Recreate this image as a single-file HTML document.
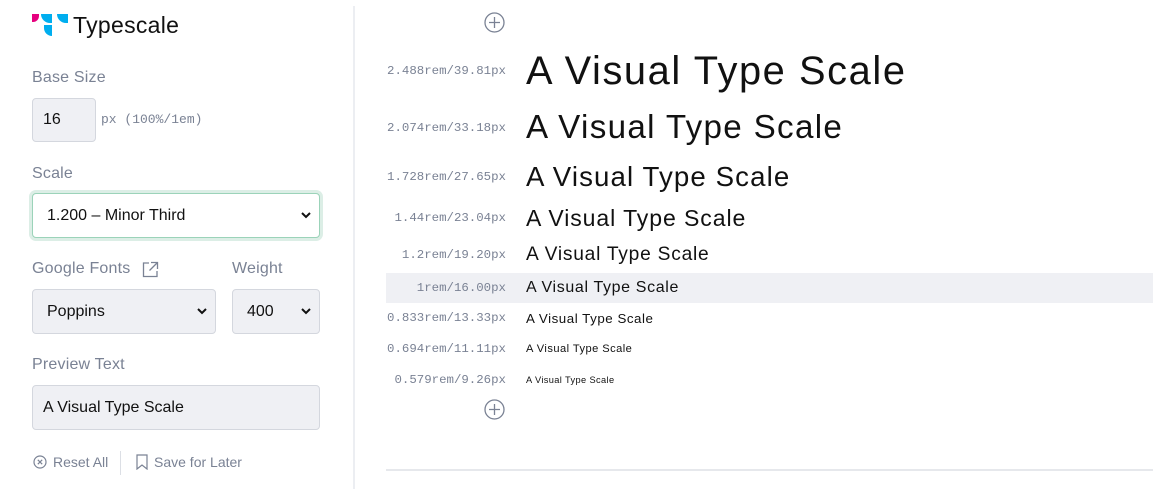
<!DOCTYPE html>
<html><head><style>
*{margin:0;padding:0;box-sizing:border-box}
body{width:1153px;height:489px;background:#fff;font-family:"Liberation Sans",sans-serif;position:relative;overflow:hidden;color:#111}
.abs{position:absolute}
.lbl{color:#7a8294;font-size:16px;letter-spacing:.2px}
.box{background:#eff0f4;border:1px solid #d4d7de;border-radius:4px;font-size:16px;color:#111;display:flex;align-items:center}
.chev{position:absolute;right:8px;top:50%;margin-top:-4px}
.row{position:absolute;left:386px;width:767px;display:flex;align-items:center}
.row .k{width:120px;text-align:right;font-family:"Liberation Mono",monospace;font-size:12.4px;color:#7a8294;white-space:nowrap}
.row .s{margin-left:20px;letter-spacing:.04em;white-space:nowrap;color:#111}
.lg{position:absolute}
</style></head><body>
<div class="lg" style="left:32px;top:14px;width:7px;height:8px;background:#e6007e;border-bottom-right-radius:6px"></div>
<div class="lg" style="left:41px;top:14px;width:11px;height:9px;background:#00aeef;border-bottom-left-radius:9px"></div>
<div class="lg" style="left:57px;top:14px;width:11px;height:9px;background:#00aeef;border-bottom-left-radius:9px"></div>
<div class="lg" style="left:44px;top:25px;width:8px;height:11px;background:#00aeef;border-bottom-left-radius:9px"></div>
<div class="abs" style="left:73px;top:12px;font-size:23px;color:#111;letter-spacing:.3px">Typescale</div>
<div class="abs" style="left:353px;top:6px;width:2px;height:483px;background:#eceef2"></div>

<div class="abs lbl" style="left:32px;top:69px">Base Size</div>
<div class="abs box" style="left:32px;top:98px;width:64px;height:44px;padding-left:10px">16</div>
<div class="abs" style="left:101px;top:112px;font-family:'Liberation Mono',monospace;font-size:13px;color:#7a8294">px (100%/1em)</div>

<div class="abs lbl" style="left:32px;top:165px">Scale</div>
<div class="abs box" style="left:32px;top:193px;width:288px;height:45px;padding-left:14px;background:#fff;border:1px solid #9bd3b9;box-shadow:0 0 0 3px #dceee6">1.200 – Minor Third
<svg class="chev" width="10" height="7" viewBox="0 0 10 7"><path d="M1 1L5 5L9 1" stroke="#111" stroke-width="2" fill="none"/></svg></div>

<div class="abs lbl" style="left:32px;top:260px">Google Fonts</div>
<svg class="abs" style="left:142px;top:261px" width="17" height="17" viewBox="0 0 17 17"><path d="M7 2H1.5V15.5H15V10M9 1.5H15.5V8M15.5 1.5L7.5 9.5" stroke="#7a8294" stroke-width="1.3" fill="none"/></svg>
<div class="abs lbl" style="left:232px;top:260px">Weight</div>
<div class="abs box" style="left:32px;top:289px;width:184px;height:45px;padding-left:14px">Poppins
<svg class="chev" width="10" height="7" viewBox="0 0 10 7"><path d="M1 1L5 5L9 1" stroke="#111" stroke-width="2" fill="none"/></svg></div>
<div class="abs box" style="left:232px;top:289px;width:88px;height:45px;padding-left:14px">400
<svg class="chev" width="10" height="7" viewBox="0 0 10 7"><path d="M1 1L5 5L9 1" stroke="#111" stroke-width="2" fill="none"/></svg></div>

<div class="abs lbl" style="left:32px;top:356px">Preview Text</div>
<div class="abs box" style="left:32px;top:385px;width:288px;height:45px;padding-left:10px">A Visual Type Scale</div>

<svg class="abs" style="left:33px;top:455px" width="14" height="14" viewBox="0 0 14 14"><circle cx="7" cy="7" r="6" stroke="#7a8294" stroke-width="1.2" fill="none"/><path d="M4.8 4.8L9.2 9.2M9.2 4.8L4.8 9.2" stroke="#7a8294" stroke-width="1.2"/></svg>
<div class="abs" style="left:53px;top:454px;font-size:14px;color:#7a8294">Reset All</div>
<div class="abs" style="left:120px;top:451px;width:1px;height:24px;background:#dcdfe5"></div>
<svg class="abs" style="left:136px;top:454px" width="12" height="16" viewBox="0 0 12 16"><path d="M1 1H11V15L6 11L1 15Z" stroke="#7a8294" stroke-width="1.2" fill="none"/></svg>
<div class="abs" style="left:154px;top:454px;font-size:14px;color:#7a8294">Save for Later</div>

<svg class="abs" style="left:484px;top:12px" width="21" height="21" viewBox="0 0 21 21"><circle cx="10.5" cy="10.5" r="9.5" stroke="#7a8294" stroke-width="1.3" fill="none"/><path d="M10.5 5V16M5 10.5H16" stroke="#7a8294" stroke-width="1.3"/></svg>
<svg class="abs" style="left:484px;top:399px" width="21" height="21" viewBox="0 0 21 21"><circle cx="10.5" cy="10.5" r="9.5" stroke="#7a8294" stroke-width="1.3" fill="none"/><path d="M10.5 5V16M5 10.5H16" stroke="#7a8294" stroke-width="1.3"/></svg>

<div class="row" style="top:46px;height:50px"><span class="k">2.488rem/39.81px</span><span class="s" style="font-size:39.81px">A Visual Type Scale</span></div>
<div class="row" style="top:107px;height:42px"><span class="k">2.074rem/33.18px</span><span class="s" style="font-size:33.18px">A Visual Type Scale</span></div>
<div class="row" style="top:159px;height:36px"><span class="k">1.728rem/27.65px</span><span class="s" style="font-size:27.65px">A Visual Type Scale</span></div>
<div class="row" style="top:203px;height:30px"><span class="k">1.44rem/23.04px</span><span class="s" style="font-size:23.04px">A Visual Type Scale</span></div>
<div class="row" style="top:242px;height:26px"><span class="k">1.2rem/19.20px</span><span class="s" style="font-size:19.2px">A Visual Type Scale</span></div>
<div class="row" style="top:273px;height:30px;background:#eff0f4"><span class="k">1rem/16.00px</span><span class="s" style="font-size:16px">A Visual Type Scale</span></div>
<div class="row" style="top:308px;height:20px"><span class="k">0.833rem/13.33px</span><span class="s" style="font-size:13.33px">A Visual Type Scale</span></div>
<div class="row" style="top:339px;height:20px"><span class="k">0.694rem/11.11px</span><span class="s" style="font-size:11.11px">A Visual Type Scale</span></div>
<div class="row" style="top:370px;height:20px"><span class="k">0.579rem/9.26px</span><span class="s" style="font-size:9.26px">A Visual Type Scale</span></div>

<div class="abs" style="left:386px;top:469px;width:767px;height:2px;background:#e6e8ec"></div>
</body></html>
